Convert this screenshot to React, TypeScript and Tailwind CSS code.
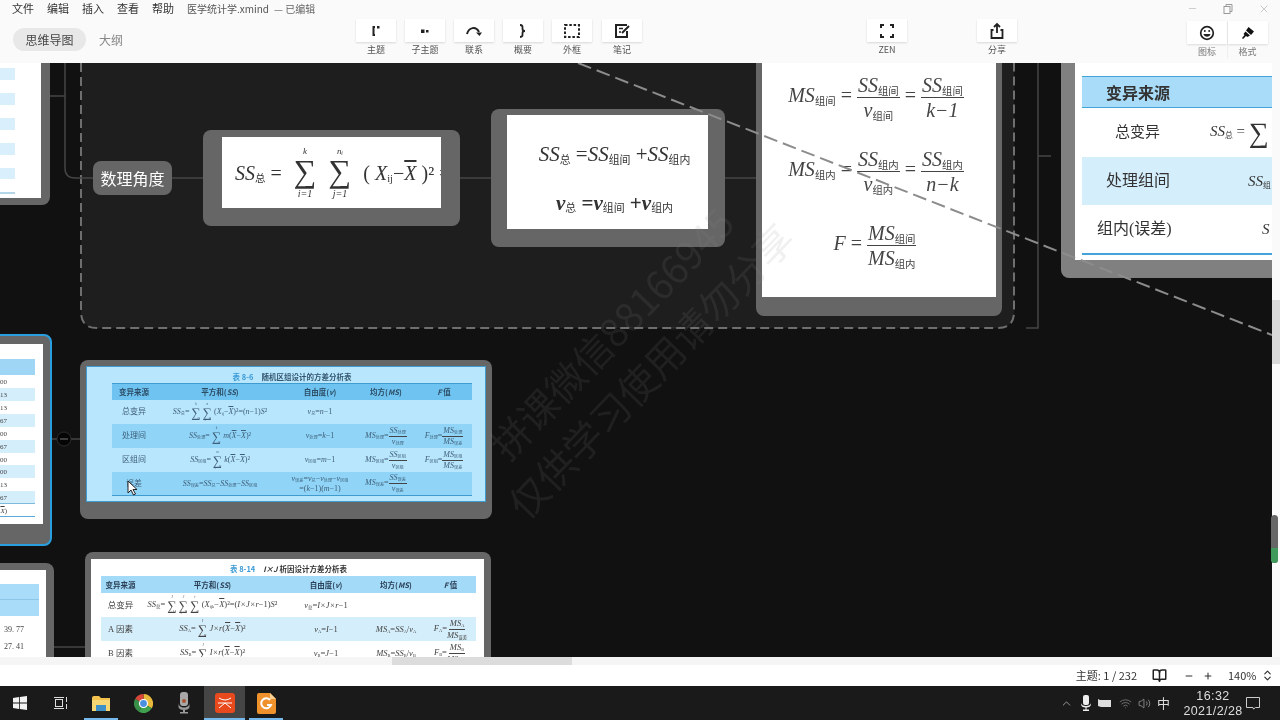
import type { ReactNode } from 'react';
import { BookOpen, ChevronsUpDown, ChevronUp, Minus, Plus, Volume2, Wifi, X } from 'lucide-react';

const serif = "font-['Liberation_Serif','Noto_Sans_CJK_SC',serif]";

function V({ v, s, bold }: { v: string; s?: string; bold?: boolean }) {
  return (
    <span className={`whitespace-nowrap ${bold ? 'font-bold' : ''}`}>
      <i>{v}</i>
      {s && <sub className="not-italic text-[0.52em] font-normal">{s}</sub>}
    </span>
  );
}

function Frac({ top, bottom }: { top: ReactNode; bottom: ReactNode }) {
  return (
    <span className="inline-flex flex-col items-center align-middle leading-[1.2]">
      <span className="border-b border-[#444] px-[1px] whitespace-nowrap">{top}</span>
      <span className="whitespace-nowrap">{bottom}</span>
    </span>
  );
}

function Sum({ top, bottom, small }: { top: string; bottom: string; small?: boolean }) {
  return (
    <span className="inline-flex flex-col items-center align-middle leading-none">
      <i className={small ? 'text-[3.5px] h-[4px]' : 'text-[9px] h-[10px]'}>{top}</i>
      <span className={small ? 'text-[13px] leading-[11px]' : 'text-[32px] leading-[29px]'}>∑</span>
      <i className={small ? 'text-[3.5px] h-[4px]' : 'text-[10px] h-[10px] mt-[3px]'}>{bottom}</i>
    </span>
  );
}

function Bar({ children }: { children: string }) {
  return <i className="overline">{children}</i>;
}

function ToolBtn({ label, children, className }: { label: string; children: ReactNode; className: string }) {
  return (
    <div className={`absolute top-[19px] flex flex-col items-center w-[40px] ${className}`}>
      <div className="w-[40px] h-[23px] bg-white shadow-[0_1px_2px_rgba(0,0,0,0.14)] flex items-center justify-center text-[#222]">
        {children}
      </div>
      <span className="text-[9px] leading-[12px] mt-[2px] text-[#555]">{label}</span>
    </div>
  );
}

function Ico({ children }: { children: ReactNode }) {
  return (
    <svg width="18" height="18" viewBox="0 0 18 18" fill="none" stroke="currentColor" strokeWidth="2">
      {children}
    </svg>
  );
}

const table86 = [
  ['总变异', <><V v="SS" s="总" />= <Sum small top="k" bottom="i=1" /> <Sum small top="n" bottom="j=1" /> (<V v="X" s="ij" />−<Bar>X</Bar>)²=(<i>n</i>−1)<i>S</i>²</>, <><V v="ν" s="总" />=<i>n</i>−1</>, '', ''],
  ['处理间', <><V v="SS" s="处理" />= <Sum small top="k" bottom="i=1" /> <i>m</i>(<Bar>X</Bar>−<Bar>X</Bar>)²</>, <><V v="ν" s="处理" />=<i>k</i>−1</>, <><V v="MS" s="处理" />=<Frac top={<V v="SS" s="处理" />} bottom={<V v="ν" s="处理" />} /></>, <><V v="F" s="处理" />=<Frac top={<V v="MS" s="处理" />} bottom={<V v="MS" s="误差" />} /></>],
  ['区组间', <><V v="SS" s="区组" />= <Sum small top="m" bottom="j=1" /> <i>k</i>(<Bar>X</Bar>−<Bar>X</Bar>)²</>, <><V v="ν" s="区组" />=<i>m</i>−1</>, <><V v="MS" s="区组" />=<Frac top={<V v="SS" s="区组" />} bottom={<V v="ν" s="区组" />} /></>, <><V v="F" s="区组" />=<Frac top={<V v="MS" s="区组" />} bottom={<V v="MS" s="误差" />} /></>],
  ['误差', <><V v="SS" s="误差" />=<V v="SS" s="总" />−<V v="SS" s="处理" />−<V v="SS" s="区组" /></>, <span className="flex flex-col items-center leading-[10px]"><span><V v="ν" s="误差" />=<V v="ν" s="总" />−<V v="ν" s="处理" />−<V v="ν" s="区组" /></span><span>=(<i>k</i>−1)(<i>m</i>−1)</span></span>, <><V v="MS" s="误差" />=<Frac top={<V v="SS" s="误差" />} bottom={<V v="ν" s="误差" />} /></>, ''],
];

const table814 = [
  ['总变异', <><V v="SS" s="总" />= <Sum small top="I" bottom="i=1" /> <Sum small top="J" bottom="j=1" /> <Sum small top="r" bottom="k=1" /> (<V v="X" s="ijk" />−<Bar>X</Bar>)²=(<i>I×J×r</i>−1)<i>S</i>²</>, <><V v="ν" s="总" />=<i>I×J×r</i>−1</>, '', ''],
  ['A 因素', <><V v="SS" s="A" />= <Sum small top="I" bottom="i=1" /> <i>J×r</i>(<Bar>X</Bar>−<Bar>X</Bar>)²</>, <><V v="ν" s="A" />=<i>I</i>−1</>, <><V v="MS" s="A" />=<V v="SS" s="A" />/<V v="ν" s="A" /></>, <><V v="F" s="A" />=<Frac top={<V v="MS" s="A" />} bottom={<V v="MS" s="误差" />} /></>],
  ['B 因素', <><V v="SS" s="B" />= <Sum small top="J" bottom="j=1" /> <i>I×r</i>(<Bar>X</Bar>−<Bar>X</Bar>)²</>, <><V v="ν" s="B" />=<i>J</i>−1</>, <><V v="MS" s="B" />=<V v="SS" s="B" />/<V v="ν" s="B" /></>, <><V v="F" s="B" />=<Frac top={<V v="MS" s="B" />} bottom={<V v="MS" s="误差" />} /></>],
];

export default function App() {
  return (
    <div className="w-[1280px] h-[720px] overflow-hidden flex flex-col bg-white blur-[0.4px] font-['Noto_Sans_CJK_SC','Liberation_Sans',sans-serif]">
      {/* title + toolbar */}
      <div className="relative h-[63px] shrink-0 bg-[#fafafa] text-[#333]">
        <div className="flex items-center h-[17px] pl-[12px] text-[11px]">
          <span className="w-[35px]">文件</span>
          <span className="w-[35px]">编辑</span>
          <span className="w-[35px]">插入</span>
          <span className="w-[35px]">查看</span>
          <span className="w-[35px]">帮助</span>
          <span className="text-[10px] text-[#555]">医学统计学.xmind</span>
          <span className="text-[10px] text-[#666] ml-[5px]">— 已编辑</span>
        </div>
        <div className="flex items-center mt-[11px] pl-[13px] text-[12px]">
          <span className="w-[73px] h-[23px] rounded-full bg-[#e8e8e8] flex items-center justify-center text-[#444]">思维导图</span>
          <span className="ml-[13px] text-[#888]">大纲</span>
        </div>

        <ToolBtn label="主题" className="left-[356px]">
          <Ico><path d="M8 5H6.5V13H8" /><rect x="10" y="4" width="2.5" height="2.5" fill="currentColor" stroke="none" /></Ico>
        </ToolBtn>
        <ToolBtn label="子主题" className="left-[405px]">
          <Ico><rect x="5" y="7.5" width="3.5" height="3.5" fill="currentColor" stroke="none" /><rect x="10" y="8" width="2.5" height="2.5" fill="currentColor" stroke="none" /></Ico>
        </ToolBtn>
        <ToolBtn label="联系" className="left-[454px]">
          <Ico><path d="M2 12C4 5 11 4 14 10" /><path d="M11 10.5H17L14.5 14Z" fill="currentColor" stroke="none" /></Ico>
        </ToolBtn>
        <ToolBtn label="概要" className="left-[503px]">
          <Ico><path d="M6 3C9 3 8.5 5 8.5 7C8.5 8.5 9.5 9 11 9C9.5 9 8.5 9.5 8.5 11C8.5 13 9 15 6 15" strokeWidth="1.8" /></Ico>
        </ToolBtn>
        <ToolBtn label="外框" className="left-[552px]">
          <Ico><rect x="2" y="3" width="14" height="12" strokeDasharray="2.5 1.8" /></Ico>
        </ToolBtn>
        <ToolBtn label="笔记" className="left-[602px]">
          <Ico><path d="M14 9V15H3V3H14" /><path d="M6 6.5H10M6 10H8" strokeWidth="1.5" /><path d="M9 11L16 4" /></Ico>
        </ToolBtn>
        <ToolBtn label="ZEN" className="left-[867px]">
          <Ico><path d="M3 6V3H6M12 3H15V6M15 12V15H12M6 15H3V12" /></Ico>
        </ToolBtn>
        <ToolBtn label="分享" className="left-[977px]">
          <Ico><path d="M5.5 8H3.5V16H14.5V8H12.5" strokeWidth="1.8" /><path d="M9 11V2M6 5L9 2L12 5" strokeWidth="1.8" /></Ico>
        </ToolBtn>
        <div className="absolute left-[1187px] top-[21px] flex">
          <div className="flex flex-col items-center w-[40px]">
            <div className="w-[40px] h-[23px] bg-white shadow-[0_1px_2px_rgba(0,0,0,0.12)] flex items-center justify-center text-[#222]">
              <svg width="16" height="16" viewBox="0 0 16 16" fill="none" stroke="currentColor" strokeWidth="1.7">
                <circle cx="8" cy="8" r="6.3" />
                <circle cx="5.8" cy="6" r="1" fill="currentColor" stroke="none" />
                <circle cx="10.2" cy="6" r="1" fill="currentColor" stroke="none" />
                <path d="M4.5 9H11.5C11 12.5 5 12.5 4.5 9Z" fill="currentColor" stroke="none" />
              </svg>
            </div>
            <span className="text-[9px] leading-[12px] mt-[2px] text-[#777]">图标</span>
          </div>
          <div className="flex flex-col items-center w-[40px] border-l border-[#eee]">
            <div className="w-[40px] h-[23px] bg-white shadow-[0_1px_2px_rgba(0,0,0,0.12)] flex items-center justify-center">
              <svg width="16" height="16" viewBox="0 0 16 16" fill="#111">
                <path d="M8.5 2L14 6.5L11 10L6 5.5Z" />
                <path d="M5.5 6.5L10 10.5L7.5 12L6 11L3 14L2 13L4.5 10L3.5 9Z" />
              </svg>
            </div>
            <span className="text-[9px] leading-[12px] mt-[2px] text-[#777]">格式</span>
          </div>
        </div>
        <div className="absolute right-[10px] top-[0px] h-[17px] flex items-center text-[#999]">
          <Minus size={11} strokeWidth={1} className="mr-[25px]" />
          <svg width="10" height="10" viewBox="0 0 10 10" fill="none" stroke="currentColor" className="mr-[25px]">
            <rect x="1" y="2.5" width="6" height="7" />
            <path d="M3 2.5V0.5H9V7.5H7" />
          </svg>
          <X size={12} strokeWidth={1} />
        </div>
      </div>

      {/* mind map canvas */}
      <div className="flex h-[594px] shrink-0">
        <div className="relative w-[1272px] h-[594px] overflow-hidden bg-[#111111]">
          <div className="absolute left-[81px] top-[-40px] w-[933px] h-[305px] rounded-b-[14px] bg-[#1e1e1e]" />

          <svg className="absolute left-0 top-0" width="1272" height="594" viewBox="0 63 1272 594" fill="none">
            <path d="M81 63V312Q81 328 97 328H998Q1014 328 1014 312V63" stroke="#6f6f6f" strokeWidth="2" strokeDasharray="9 5" />
            <g stroke="#454545" strokeWidth="1.5">
              <path d="M50 96H65M65 63V168Q65 178 75 178H93" />
              <path d="M172 178H203M460 178H491M725 178H756" />
              <path d="M1026 328H1038V63M1038 156H1051" />
              <path d="M52 439H80M54 647H85" />
            </g>
            <circle cx="64" cy="439" r="7" fill="#050505" stroke="#2c2c2c" />
            <path d="M60 439H68" stroke="#777" />
          </svg>

          {/* top left node */}
          <div className="absolute left-[-20px] top-[-20px] w-[70px] h-[162px] rounded-br-[8px] bg-[#666666]">
            <div className="w-[61px] h-[155px] bg-white flex flex-col gap-[13px] pt-[25px]">
              <div className="w-[35px] h-[12px] bg-[#d9effb]" />
              <div className="w-[35px] h-[12px] bg-[#d9effb]" />
              <div className="w-[35px] h-[12px] bg-[#d9effb]" />
              <div className="w-[35px] h-[12px] bg-[#d9effb]" />
              <div className="w-[35px] h-[11px] bg-[#d9effb]" />
              <div className="w-[35px] h-[2px] bg-[#b5d5e8]" />
            </div>
          </div>

          <div className="absolute left-[93px] top-[98px] w-[79px] h-[34px] rounded-[8px] bg-[#666666] text-white text-[16px] flex items-center justify-center">
            数理角度
          </div>

          {/* SS total node */}
          <div className="absolute left-[203px] top-[67px] w-[257px] h-[96px] rounded-[8px] bg-[#666666] pl-[19px] pt-[7px]">
            <div className={`w-[219px] h-[71px] bg-white overflow-hidden flex items-center pl-[13px] gap-[12px] text-[20px] text-[#333] whitespace-nowrap ${serif}`}>
              <span><V v="SS" s="总" /> =</span>
              <Sum top="k" bottom="i=1" />
              <Sum top="nᵢ" bottom="j=1" />
              <span>( <V v="X" s="ij" />−<Bar>X</Bar> )² =</span>
            </div>
          </div>

          {/* decomposition node */}
          <div className="absolute left-[491px] top-[46px] w-[234px] h-[138px] rounded-[8px] bg-[#666666] pl-[16px] pt-[6px]">
            <div className={`w-[201px] h-[114px] bg-white flex flex-col items-center justify-center pt-[14px] pl-[14px] gap-[17px] text-[21px] text-[#333] whitespace-nowrap ${serif}`}>
              <span><V v="SS" s="总" /> =<V v="SS" s="组间" /> +<V v="SS" s="组内" /></span>
              <span className="font-bold"><V bold v="ν" s="总" /> =<V bold v="ν" s="组间" /> +<V bold v="ν" s="组内" /></span>
            </div>
          </div>

          {/* MS / F node */}
          <div className="absolute left-[756px] top-[-20px] w-[246px] h-[273px] rounded-b-[8px] bg-[#666666] pl-[6px]">
            <div className={`w-[234px] h-[254px] bg-white flex flex-col items-center pt-[30px] text-[20px] text-[#444] whitespace-nowrap ${serif}`}>
              <span className="h-[74px] mr-[6px]"><V v="MS" s="组间" /> = <Frac top={<V v="SS" s="组间" />} bottom={<V v="ν" s="组间" />} /> = <Frac top={<V v="SS" s="组间" />} bottom={<i>k−1</i>} /></span>
              <span className="h-[74px] mr-[6px]"><V v="MS" s="组内" /> = <Frac top={<V v="SS" s="组内" />} bottom={<V v="ν" s="组内" />} /> = <Frac top={<V v="SS" s="组内" />} bottom={<i>n−k</i>} /></span>
              <span className="mr-[8px]"><i>F</i> = <Frac top={<V v="MS" s="组间" />} bottom={<V v="MS" s="组内" />} /></span>
            </div>
          </div>

          {/* right table node */}
          <div className="absolute left-[1061px] top-[-20px] w-[240px] h-[235px] rounded-bl-[8px] bg-[#808080] pl-[14px]">
            <div className={`w-[226px] h-[217px] bg-white pt-[33px] pl-[7px] text-[15px] text-[#333] ${serif}`}>
              <div className="h-[32px] bg-[#a9dcf8] border-y border-[#45a3da] flex items-center pl-[24px] font-bold text-[16px] font-['Noto_Sans_CJK_SC',sans-serif]">变异来源</div>
              <div className="h-[49px] flex items-center">
                <span className="w-[128px] pl-[33px]">总变异</span>
                <span className="whitespace-nowrap"><V v="SS" s="总" /> = <span className="text-[28px] leading-none align-middle">∑</span></span>
              </div>
              <div className="h-[48px] bg-[#d5eefb] flex items-center">
                <span className="w-[166px] pl-[24px] text-[16px]">处理组间</span>
                <V v="SS" s="组" />
              </div>
              <div className="h-[48px] flex items-center">
                <span className="w-[180px] pl-[15px] text-[16px]">组内(误差)</span>
                <V v="S" />
              </div>
              <div className="h-[2px] bg-[#45a3da]" />
            </div>
          </div>

          {/* selected node */}
          <div className="absolute left-[-20px] top-[271px] w-[72px] h-[212px] rounded-r-[8px] border-2 border-[#2a9fe0] bg-[#666666] pt-[8px]">
            <div className={`w-[61px] h-[180px] bg-white pt-[15px] text-[7px] text-[#444] text-right ${serif}`}>
              <div className="h-[16px] w-[53px] bg-[#9fd6f6]" />
              <div className="w-[53px] h-[13px] pt-[2px] pr-[28px]">00</div>
              <div className="w-[53px] h-[13px] pt-[2px] pr-[28px] bg-[#d5eefb]">13</div>
              <div className="w-[53px] h-[13px] pt-[2px] pr-[28px]">13</div>
              <div className="w-[53px] h-[13px] pt-[2px] pr-[28px] bg-[#d5eefb]">67</div>
              <div className="w-[53px] h-[13px] pt-[2px] pr-[28px]">00</div>
              <div className="w-[53px] h-[13px] pt-[2px] pr-[28px] bg-[#d5eefb]">67</div>
              <div className="w-[53px] h-[12px] pt-[2px] pr-[28px]">00</div>
              <div className="w-[53px] h-[13px] pt-[2px] pr-[28px] bg-[#d5eefb]">00</div>
              <div className="w-[53px] h-[13px] pt-[2px] pr-[28px]">13</div>
              <div className="w-[53px] h-[13px] pt-[2px] pr-[28px] bg-[#d5eefb] border-b border-[#7fb9dc]">67</div>
              <div className="w-[53px] h-[13px] pt-[2px] pr-[28px] border-b border-[#5aa9d8]"><Bar>X</Bar>)</div>
            </div>
          </div>

          {/* table 8-6 */}
          <div className="absolute left-[80px] top-[297px] w-[412px] h-[159px] rounded-[8px] bg-[#666666] p-[6px]">
            <div className={`w-[400px] h-[136px] bg-[#b8e6fd] border border-[#3f9bd0] pl-[25px] pt-[4px] text-[8px] text-[#3f5f78] ${serif}`}>
              <div className="flex justify-center h-[12px] items-center w-[360px] text-[7.5px] font-['Noto_Sans_CJK_SC',sans-serif] font-bold text-[#33566e]">
                <span className="text-[#3a9ad5] mr-[8px]">表 8-6</span>随机区组设计的方差分析表
              </div>
              <div className="grid grid-cols-[44px_128px_72px_60px_56px] w-[360px] h-[17px] items-center justify-items-center bg-[#6fc3f0] border-t border-[#3f9bd0] text-[7.5px] font-bold text-[#2c4d66] font-['Noto_Sans_CJK_SC',sans-serif]">
                <span>变异来源</span><span>平方和(<i>SS</i>)</span><span>自由度(<i>ν</i>)</span><span>均方(<i>MS</i>)</span><span><i>F</i> 值</span>
              </div>
              {table86.map((row, i) => (
                <div key={i} className={`grid grid-cols-[44px_128px_72px_60px_56px] w-[360px] h-[24px] items-center justify-items-center ${i % 2 === 1 ? 'bg-[#90d5f8]' : ''} ${i === 3 ? 'border-b border-[#3f9bd0]' : ''}`}>
                  {row.map((c, j) => (
                    <span key={j} className="whitespace-nowrap">{c}</span>
                  ))}
                </div>
              ))}
            </div>
          </div>

          {/* bottom left node */}
          <div className="absolute left-[-20px] top-[500px] w-[74px] h-[120px] rounded-tr-[8px] bg-[#666666] pt-[7px]">
            <div className={`w-[66px] h-[113px] bg-white pt-[14px] text-[8px] text-[#444] ${serif}`}>
              <div className="w-[59px] h-[16px] bg-[#a9dcf8] border-b border-[#8cc6e8]" />
              <div className="w-[59px] h-[16px] bg-[#a9dcf8]" />
              <div className="w-[59px] pl-[24px] pt-[8px] h-[22px]">39. 77</div>
              <div className="w-[59px] pl-[24px] pt-[3px]">27. 41</div>
            </div>
          </div>

          {/* table 8-14 */}
          <div className="absolute left-[85px] top-[489px] w-[406px] h-[120px] rounded-t-[8px] bg-[#666666] px-[6px] pt-[7px]">
            <div className={`w-[393px] h-[113px] bg-white pl-[10px] pt-[3px] text-[8.5px] text-[#444] ${serif}`}>
              <div className="flex justify-center h-[14px] items-center w-[375px] text-[7.5px] font-['Noto_Sans_CJK_SC',sans-serif] font-bold text-[#333]">
                <span className="text-[#3a9ad5] mr-[8px]">表 8-14</span><i className="mr-[2px]">I×J</i>析因设计方差分析表
              </div>
              <div className="grid grid-cols-[39px_145px_82px_58px_51px] w-[375px] h-[17px] items-center justify-items-center bg-[#a3daf7] text-[7.5px] font-bold text-[#2c4058] font-['Noto_Sans_CJK_SC',sans-serif]">
                <span>变异来源</span><span>平方和(<i>SS</i>)</span><span>自由度(<i>ν</i>)</span><span>均方(<i>MS</i>)</span><span><i>F</i> 值</span>
              </div>
              {table814.map((row, i) => (
                <div key={i} className={`grid grid-cols-[39px_145px_82px_58px_51px] w-[375px] h-[24px] items-center justify-items-center ${i === 1 ? 'bg-[#d5eefb]' : ''}`}>
                  {row.map((c, j) => (
                    <span key={j} className="whitespace-nowrap">{c}</span>
                  ))}
                </div>
              ))}
            </div>
          </div>

          {/* relation line */}
          <svg className="absolute left-0 top-0" width="1272" height="594" viewBox="0 63 1272 594" fill="none">
            <path d="M578 63L1272 335" stroke="#8c8c8c" strokeWidth="2" strokeDasharray="14 6" />
          </svg>

          {/* watermark */}
          <div className="absolute left-[420px] top-[234px] w-[420px] -rotate-[46deg] text-[39px] leading-[54px] text-center text-[rgba(140,140,140,0.13)] whitespace-nowrap pointer-events-none">
            <div>拼课微信88166945</div>
            <div>仅供学习使用请勿分享</div>
          </div>

          {/* mouse cursor */}
          <svg className="absolute left-[127px] top-[417px]" width="12" height="16" viewBox="0 0 12 16">
            <path d="M1 1V13L4 10L6.5 15L8.5 14L6 9.5H10Z" fill="#fff" stroke="#222" strokeWidth="1" />
          </svg>
        </div>

        {/* vertical scrollbar */}
        <div className="relative w-[8px] h-[594px] bg-[#fafafa]">
          <div className="w-[8px] h-[64px] mt-[237px] bg-[#d9d9d9]" />
          <div className="absolute left-[-1px] top-[452px] w-[7px] h-[48px] rounded-full bg-[#666666] flex flex-col justify-end overflow-hidden">
            <div className="h-[15px] bg-[#3f9a5c]" />
          </div>
        </div>
      </div>

      {/* horizontal scrollbar */}
      <div className="h-[8px] shrink-0 bg-[#f5f5f5] pl-[392px]">
        <div className="w-[180px] h-[8px] bg-[#dcdcdc]" />
      </div>

      {/* status bar */}
      <div className="h-[21px] shrink-0 bg-white flex items-center justify-end text-[#333] text-[11px] pr-[6px]">
        <span>主题: 1 / 232</span>
        <BookOpen size={15} strokeWidth={2.4} className="ml-[15px] mr-[17px] text-[#222]" />
        <Minus size={10} strokeWidth={2.5} />
        <Plus size={10} strokeWidth={2.5} className="ml-[9px]" />
        <span className="ml-[15px] w-[26px]">140%</span>
        <ChevronsUpDown size={13} strokeWidth={2.2} className="ml-[7px]" />
      </div>

      {/* windows taskbar */}
      <div className="relative h-[34px] shrink-0 bg-[#1a1a1a] text-[#ddd] flex items-center">
        <div className="w-[40px] flex justify-center">
          <svg width="14" height="14" viewBox="0 0 14 14" fill="#f2f2f2">
            <path d="M0 2L6 1.1V6.6H0ZM6.8 1L14 0V6.6H6.8ZM0 7.4H6V12.9L0 12ZM6.8 7.4H14V14L6.8 13Z" />
          </svg>
        </div>
        <div className="w-[40px] flex justify-center">
          <svg width="15" height="14" viewBox="0 0 15 14" fill="none" stroke="#ddd">
            <rect x="2.5" y="3.5" width="7" height="7" />
            <path d="M1 1.5H11M1 12.5H11M13.5 1V6M13.5 8V13" />
          </svg>
        </div>
        <div className="w-[42px] h-[34px] flex justify-center items-center relative">
          <svg width="20" height="17" viewBox="0 0 20 17">
            <path d="M1 3Q1 1 3 1H8L10 3H19V16H1Z" fill="#f2c14e" />
            <rect x="1" y="5" width="18" height="11" fill="#f7d774" />
            <rect x="5" y="10" width="10" height="6" fill="#3f8fc9" />
          </svg>
          <div className="absolute bottom-0 left-[4px] w-[34px] h-[2px] bg-[#76b9ed]" />
        </div>
        <div className="w-[42px] flex justify-center">
          <svg width="19" height="19" viewBox="0 0 20 20">
            <path d="M10 10L10 0A10 10 0 0 1 18.7 15Z" fill="#e8b93a" />
            <path d="M10 10L18.7 15A10 10 0 0 1 5 18.7Z" fill="#3fa14e" />
            <path d="M10 10L5 18.7A10 10 0 0 1 1.3 5Z" fill="#3a8f48" />
            <path d="M10 10L1.3 5A10 10 0 0 1 10 0Z" fill="#d8473a" />
            <circle cx="10" cy="10" r="4.8" fill="#fff" />
            <circle cx="10" cy="10" r="3.6" fill="#4a8fe0" />
          </svg>
        </div>
        <div className="w-[40px] flex justify-center">
          <svg width="14" height="22" viewBox="0 0 14 22">
            <rect x="3" y="0" width="8" height="14" rx="3" fill="#a8a8a8" />
            <circle cx="7" cy="9" r="2" fill="#a8552f" />
            <path d="M1.5 11C1.5 17 12.5 17 12.5 11V15Q12 18 7 18Q2 18 1.5 15ZM6 18H8V20H6ZM3 20H11V21.5H3Z" fill="#9a9a9a" />
          </svg>
        </div>
        <div className="w-[41px] h-[34px] flex justify-center items-center bg-[#454545] relative">
          <svg width="20" height="20" viewBox="0 0 20 20" fill="none">
            <rect width="20" height="20" rx="3" fill="#e8491d" />
            <path d="M4 5Q10 9 16 5M10 10L4 15M10 10L16 15M3 10H17" stroke="#fff" strokeWidth="1" />
          </svg>
          <div className="absolute bottom-0 left-0 w-[41px] h-[2px] bg-[#76b9ed]" />
        </div>
        <div className="w-[42px] h-[34px] flex justify-center items-center relative">
          <svg width="20" height="21" viewBox="0 0 20 21" fill="none">
            <path d="M1 2Q1 0 3 0H14L20 6V19Q20 21 18 21H3Q1 21 1 19Z" fill="#f0922b" />
            <path d="M14 0L20 6H14Z" fill="#fbd093" />
            <path d="M14 7A5 5 0 1 0 15 12H11" stroke="#fff" strokeWidth="2" />
          </svg>
          <div className="absolute bottom-0 left-[4px] w-[34px] h-[2px] bg-[#76b9ed]" />
        </div>

        <div className="ml-auto flex items-center">
          <ChevronUp size={13} strokeWidth={1.2} />
          <svg width="10" height="16" viewBox="0 0 10 16" fill="#eee" className="ml-[8px]">
            <rect x="2" y="0" width="6" height="10" rx="2" />
            <path d="M0 8C0 12 10 12 10 8V9.5Q9.5 12.5 5.5 12.5V14.5H8V16H2V14.5H4.5V12.5Q0.5 12.5 0 9.5Z" />
          </svg>
          <svg width="14" height="9" viewBox="0 0 14 9" className="ml-[7px]">
            <path d="M0 0L2 1H13V8H3L0 7Z" fill="#ddd" />
          </svg>
          <Wifi size={13} strokeWidth={1.2} className="ml-[7px] text-[#999]" />
          <Volume2 size={13} strokeWidth={1.2} className="ml-[6px] text-[#bbb]" />
          <span className="ml-[6px] text-[13px] w-[14px]">中</span>
          <div className="w-[66px] ml-[9px] pt-[2px] flex flex-col items-center text-[12.5px] leading-[15px] font-['Liberation_Sans',sans-serif] tracking-[0.4px]">
            <span>16:32</span>
            <span>2021/2/28</span>
          </div>
          <svg width="14" height="14" viewBox="0 0 14 14" fill="none" stroke="#ccc" className="mr-[20px]">
            <path d="M0.5 1.5H13.5V11.5H9.5L7.5 13L7 11.5H0.5Z" />
          </svg>
        </div>
      </div>
    </div>
  );
}
